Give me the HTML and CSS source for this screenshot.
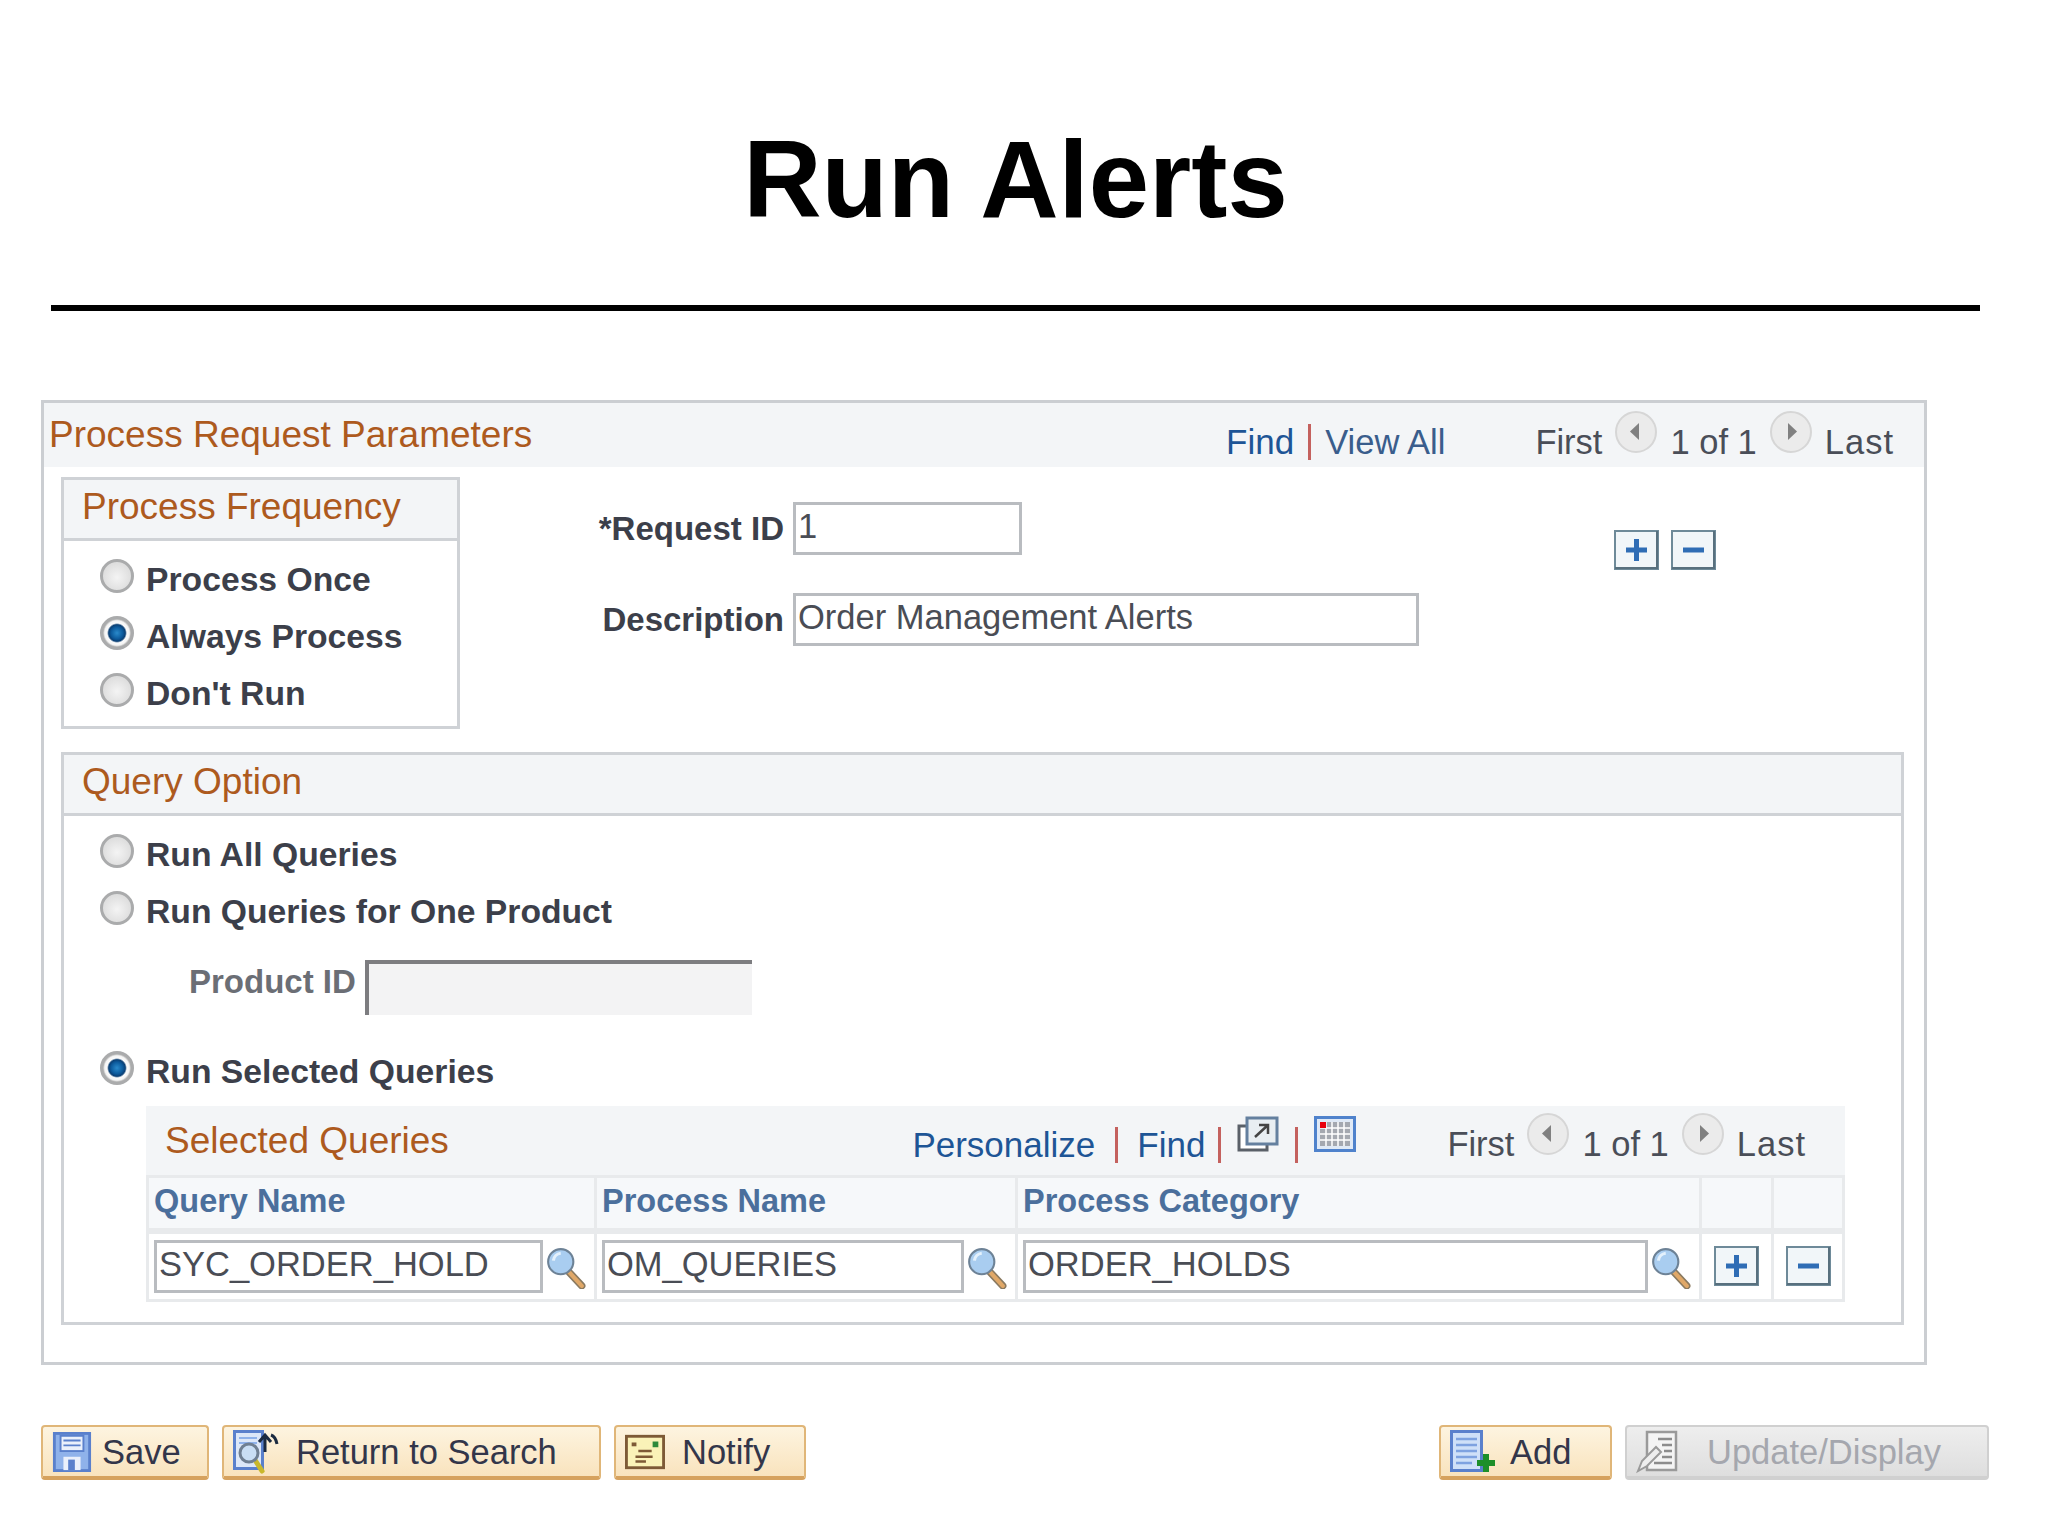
FILE: index.html

```html
<!DOCTYPE html>
<html lang="en">
<head>
    <meta charset="UTF-8">
    <title>Run Alerts</title>
    <link rel="stylesheet" href="styles.css">
</head>
<body>

<svg class="defs" width="0" height="0">
    <symbol id="arrow-prev" viewBox="0 0 42 42">
        <circle cx="21" cy="21" r="20" fill="#ebebeb" stroke="#d6d6d6" stroke-width="2"/>
        <path d="M24 12v17l-9-8.500z" fill="#808080"/>
    </symbol>
    <symbol id="arrow-next" viewBox="0 0 42 42">
        <circle cx="21" cy="21" r="20" fill="#ebebeb" stroke="#d6d6d6" stroke-width="2"/>
        <path d="M18 12v17l9-8.500z" fill="#808080"/>
    </symbol>
    <symbol id="lookup" viewBox="0 0 40 40">
        <path d="M23 24l12 13" stroke="#8a7a60" stroke-width="7" stroke-linecap="round"/>
        <path d="M23 24l12 13" stroke="#e0a868" stroke-width="4" stroke-linecap="round"/>
        <circle cx="15" cy="14" r="12" fill="#a9cdf0" stroke="#6d8296" stroke-width="2"/>
        <path d="M8 13a8 8 0 0 1 7-7" fill="none" stroke="#e4f1fc" stroke-width="3"/>
    </symbol>
    <symbol id="plus" viewBox="0 0 45 40">
        <rect x="1" y="1" width="43" height="38" fill="#f1f6f9" stroke="#6e8a99" stroke-width="2"/>
        <path d="M1 38h43M43 1v38" stroke="#58707e" stroke-width="2"/>
        <path d="M22.500 9v22M12 20h21" stroke="#2f6db5" stroke-width="5"/>
    </symbol>
    <symbol id="minus" viewBox="0 0 45 40">
        <rect x="1" y="1" width="43" height="38" fill="#f1f6f9" stroke="#6e8a99" stroke-width="2"/>
        <path d="M1 38h43M43 1v38" stroke="#58707e" stroke-width="2"/>
        <path d="M12 20h21" stroke="#2f6db5" stroke-width="5"/>
    </symbol>
</svg>

<header class="title">
    <h1>Run Alerts</h1>
</header>

<div class="panel">
    <div class="panel-head">
        <span class="section-title">Process Request Parameters</span>
        <div class="nav">
            <a class="link">Find</a>
            <span class="bar"></span>
            <a class="link muted">View All</a>
            <div class="pager">
                <span>First</span>
                <svg class="arrow"><use href="#arrow-prev"/></svg>
                <span>1 of 1</span>
                <svg class="arrow"><use href="#arrow-next"/></svg>
                <span class="last">Last</span>
            </div>
        </div>
    </div>

    <div class="top-row">
        <div class="box freq-box">
            <div class="box-head">Process Frequency</div>
            <div class="radio-list">
                <label class="option"><span class="radio"></span>Process Once</label>
                <label class="option"><span class="radio checked"></span>Always Process</label>
                <label class="option"><span class="radio"></span>Don't Run</label>
            </div>
        </div>

        <div class="request-form">
            <label class="field-label">*Request ID</label>
            <div class="input request-id">1</div>
            <label class="field-label">Description</label>
            <div class="input description">Order Management Alerts</div>
        </div>

        <div class="row-buttons">
            <svg class="row-btn"><use href="#plus"/></svg>
            <svg class="row-btn"><use href="#minus"/></svg>
        </div>
    </div>

    <div class="box query-box">
        <div class="box-head">Query Option</div>
        <div class="radio-list">
            <label class="option"><span class="radio"></span>Run All Queries</label>
            <label class="option"><span class="radio"></span>Run Queries for One Product</label>
            <div class="product-row">
                <label class="field-label disabled">Product ID</label>
                <div class="input product-id"></div>
            </div>
            <label class="option selected-option"><span class="radio checked"></span>Run Selected Queries</label>
        </div>

        <div class="grid-wrap">
            <div class="grid-head">
                <span class="section-title">Selected Queries</span>
                <div class="nav">
                    <a class="link personalize">Personalize</a>
                    <span class="bar"></span>
                    <a class="link grid-find">Find</a>
                    <span class="bar"></span>
                    <svg class="grid-icon" viewBox="0 0 42 36">
                        <rect x="2" y="10" width="28" height="24" fill="#fff" stroke="#5a6068" stroke-width="3"/>
                        <rect x="10" y="2" width="30" height="26" fill="#e8eef2" stroke="#64809f" stroke-width="3"/>
                        <path d="M18 21l13-12M22 9h9v9" fill="none" stroke="#444" stroke-width="2.500"/>
                    </svg>
                    <span class="bar"></span>
                    <svg class="grid-icon" viewBox="0 0 42 36">
                        <rect x="1.500" y="1.500" width="39" height="33" fill="#dfe9f6" stroke="#4f82cc" stroke-width="3"/>
                        <rect x="6" y="6" width="30" height="24" fill="#a4a8b0"/>
                        <path d="M6 12h30M6 18h30M6 24h30M12 6v24M18 6v24M24 6v24M30 6v24" stroke="#fff" stroke-width="1.500"/>
                        <rect x="6" y="6" width="6" height="6" fill="#e8000c"/>
                    </svg>
                    <div class="pager">
                        <span>First</span>
                        <svg class="arrow"><use href="#arrow-prev"/></svg>
                        <span>1 of 1</span>
                        <svg class="arrow"><use href="#arrow-next"/></svg>
                        <span class="last">Last</span>
                    </div>
                </div>
            </div>
            <table class="grid">
                <colgroup>
                    <col class="col-query">
                    <col class="col-process">
                    <col class="col-category">
                    <col class="col-plus">
                    <col class="col-minus">
                </colgroup>
                <thead>
                    <tr>
                        <th>Query Name</th>
                        <th>Process Name</th>
                        <th>Process Category</th>
                        <th></th>
                        <th></th>
                    </tr>
                </thead>
                <tbody>
                    <tr>
                        <td><div class="cell"><div class="input">SYC_ORDER_HOLD</div><svg class="lookup"><use href="#lookup"/></svg></div></td>
                        <td><div class="cell"><div class="input">OM_QUERIES</div><svg class="lookup"><use href="#lookup"/></svg></div></td>
                        <td><div class="cell"><div class="input">ORDER_HOLDS</div><svg class="lookup"><use href="#lookup"/></svg></div></td>
                        <td class="btn-cell"><svg class="row-btn"><use href="#plus"/></svg></td>
                        <td class="btn-cell"><svg class="row-btn"><use href="#minus"/></svg></td>
                    </tr>
                </tbody>
            </table>
        </div>
    </div>
</div>

<div class="toolbar">
    <div class="button-group">
        <button class="btn save-btn">
            <svg class="btn-icon" viewBox="0 0 40 42">
                <rect x="1.500" y="1.500" width="37" height="39" fill="#8fb2ea" stroke="#5a80cc" stroke-width="3"/>
                <rect x="8" y="4" width="24" height="16" fill="#eaf0fb" stroke="#5a80cc" stroke-width="2"/>
                <path d="M11 9h18M11 14h18" stroke="#5a80cc" stroke-width="2"/>
                <rect x="11" y="26" width="18" height="14" fill="#eaf0fb"/>
                <rect x="16" y="29" width="7" height="11" fill="#5a80cc"/>
            </svg>
            Save
        </button>
        <button class="btn return-btn">
            <svg class="btn-icon wide" viewBox="0 0 46 44">
                <rect x="1.500" y="1.500" width="28" height="37" fill="#dce7f8" stroke="#5a80cc" stroke-width="3"/>
                <path d="M6 8h18M6 13h18" stroke="#8fb2ea" stroke-width="2"/>
                <path d="M22 30l7 11" stroke="#c9b82c" stroke-width="5" stroke-linecap="round"/>
                <circle cx="16" cy="23" r="9" fill="#c9def4" stroke="#6f7f92" stroke-width="3"/>
                <path d="M32 22V6M26 12l6-7 6 7M38 5c3 1 5 4 6 9" fill="none" stroke="#1b2a40" stroke-width="3"/>
            </svg>
            <span>Return to Search</span>
        </button>
        <button class="btn notify-btn">
            <svg class="btn-icon" viewBox="0 0 42 36">
                <rect x="1.500" y="1.500" width="39" height="33" fill="#faf2b8" stroke="#7d5a36" stroke-width="3"/>
                <path d="M7 8h5v4H7z" fill="#7d5a36"/>
                <path d="M29 7h6v6h-6z" fill="#2f8a3a"/>
                <path d="M14 17h14M11 23h18M11 28h11" stroke="#7d5a36" stroke-width="2.500"/>
            </svg>
            Notify
        </button>
    </div>
    <div class="button-group">
        <button class="btn add-btn">
            <svg class="btn-icon wide" viewBox="0 0 46 44">
                <rect x="1.500" y="1.500" width="30" height="39" fill="#cfe0f8" stroke="#5a80cc" stroke-width="3"/>
                <path d="M6 9h21M6 15h21M6 21h21M6 27h21M6 33h16" stroke="#7ea2e0" stroke-width="2.500"/>
                <path d="M36 24v18M27 33h18" stroke="#1d8f2a" stroke-width="6"/>
            </svg>
            <span>Add</span>
        </button>
        <button class="btn disabled-btn">
            <svg class="btn-icon wide" viewBox="0 0 46 44">
                <rect x="11" y="2" width="29" height="38" fill="#f4f4f4" stroke="#9a9a9a" stroke-width="2.500"/>
                <path d="M22 9h14M26 15h10M28 21h8M26 27h10M18 33h18" stroke="#8c8c8c" stroke-width="2.500"/>
                <path d="M2 41l4-10 14-14 5 5-14 14z" fill="#eee" stroke="#9a9a9a" stroke-width="2"/>
            </svg>
            <span>Update/Display</span>
        </button>
    </div>
</div>

</body>
</html>
```

FILE: styles.css

```css
* {
    box-sizing: border-box;
}

body {
    margin: 0;
    padding: 0 59px 46px 41px;
    background-color: #fff;
    font-family: "Liberation Sans", Arial, sans-serif;
    font-size: 33.700px;
    color: #3c3f4a;
}

.defs {
    position: absolute;
}

.title {
    margin: 0 9px 0 10px;
    height: 311px;
    padding-top: 118px;
    border-bottom: 6px solid #000;
    text-align: center;
}

.title h1 {
    margin: 0;
    font-size: 108.500px;
    line-height: 124px;
    font-weight: bold;
    color: #000;
}

.panel {
    margin-top: 89px;
    width: 1886px;
    height: 965px;
    border: 3px solid #cbced2;
}

.panel-head {
    height: 64px;
    padding: 0 30px 0 5px;
    display: flex;
    align-items: center;
    justify-content: space-between;
    background-color: #f3f5f7;
}

.section-title {
    font-size: 37px;
    color: #ad5a1e;
    white-space: nowrap;
}

.nav {
    display: flex;
    align-items: center;
    gap: 14px;
    font-size: 34.500px;
    padding-top: 14px;
}

.link {
    color: #1e5596;
    font-size: 35px;
}

.link.muted {
    color: #3a5d8c;
    font-size: 34.500px;
}

.bar {
    width: 3px;
    height: 36px;
    background-color: #c4615e;
}

.pager {
    display: flex;
    align-items: center;
    gap: 13px;
    margin-left: 76px;
    color: #4a4e58;
}

.last {
    letter-spacing: 1px;
}

.arrow {
    width: 42px;
    height: 42px;
    margin-bottom: 21px;
}

.top-row {
    display: flex;
    align-items: flex-start;
    padding: 10px 0 0 17px;
}

.box {
    border: 3px solid #cfd2d6;
}

.freq-box {
    width: 399px;
    height: 252px;
}

.box-head {
    height: 61px;
    padding: 0 0 4px 18px;
    display: flex;
    align-items: center;
    font-size: 37px;
    color: #ad5a1e;
    background-color: #f3f5f7;
    border-bottom: 3px solid #cfd2d6;
}

.radio-list {
    padding: 9px 0 0 36px;
}

.option {
    height: 57px;
    padding-top: 2px;
    display: flex;
    align-items: center;
    gap: 12px;
    font-weight: bold;
}

.radio {
    width: 34px;
    height: 34px;
    margin-top: -8px;
    border-radius: 50%;
    border: 3px solid #aaabac;
    background: radial-gradient(circle at 50% 55%, #f4f4f4, #d4d4d4);
    flex-shrink: 0;
}

.radio.checked {
    background: radial-gradient(circle, #2a8acb 0, #0c5a9c 30%, #0a3f74 42%, #fbfbfb 50%, #f4f4f4 62%, #b4b4b4 70%, #dcdcdc 100%);
}

.request-form {
    display: grid;
    grid-template-columns: 324px auto;
    column-gap: 9px;
    row-gap: 38px;
    align-items: center;
    padding-top: 25px;
}

.field-label {
    font-size: 33px;
    font-weight: bold;
    text-align: right;
    white-space: nowrap;
}

.field-label.disabled {
    color: #6b6e75;
}

.input {
    height: 53px;
    padding: 0 2px;
    border: 3px solid #b9bcc0;
    background-color: #fff;
    font-size: 34.500px;
    line-height: 43px;
    color: #4a4d55;
    white-space: nowrap;
    overflow: hidden;
}

.request-id {
    width: 229px;
}

.description {
    width: 626px;
}

.row-buttons {
    display: flex;
    gap: 12px;
    margin: 53px 0 0 195px;
}

.row-btn {
    width: 45px;
    height: 40px;
    display: block;
}

.query-box {
    margin: 23px 0 0 17px;
    width: 1843px;
    height: 573px;
}

.product-row {
    display: flex;
    align-items: flex-start;
    gap: 9px;
    margin: 21px 0 0 89px;
}

.product-row .field-label {
    line-height: 44px;
}

.product-id {
    width: 387px;
    height: 55px;
    border: none;
    border-top: 4px solid #7d7d80;
    border-left: 4px solid #7d7d80;
    background-color: #f3f3f4;
}

.selected-option {
    margin-top: 27px;
}

.grid-wrap {
    margin: 7px 0 0 82px;
    width: 1699px;
}

.grid-head {
    height: 69px;
    padding: 1px 39px 0 19px;
    display: flex;
    align-items: center;
    justify-content: space-between;
    background-color: #f3f5f7;
}

.grid-head .nav {
    gap: 16px;
    padding-top: 7px;
}

.grid-head .pager {
    margin-left: 75px;
}

.personalize {
    margin-right: 4px;
}

.grid-find {
    margin: 0 -3px 0 3px;
}

.grid-icon {
    width: 42px;
    height: 36px;
    margin-bottom: 22px;
}

.grid {
    width: 100%;
    table-layout: fixed;
    border-collapse: collapse;
}

.col-query {
    width: 448px;
}

.col-process {
    width: 421px;
}

.col-plus {
    width: 72px;
}

.col-minus {
    width: 71px;
}

th {
    height: 54px;
    padding: 0 5px 2px 5px;
    text-align: left;
    font-size: 32.500px;
    color: #4b6f9c;
    background-color: #f6f8fa;
    border: 3px solid #e8eaec;
}

td {
    height: 70px;
    padding: 0 7px 0 5px;
    border: 3px solid #e8eaec;
    border-top-width: 6px;
}

.cell {
    display: flex;
    align-items: center;
    gap: 2px;
}

.cell .input {
    flex: 1;
}

.lookup {
    width: 42px;
    height: 42px;
    flex-shrink: 0;
    margin-top: 4px;
}

.btn-cell {
    padding: 0 12px;
}

.toolbar {
    display: flex;
    justify-content: space-between;
    margin-top: 60px;
}

.button-group {
    display: flex;
    gap: 13px;
}

.btn {
    height: 55px;
    padding: 1px 0 0 9px;
    display: flex;
    align-items: center;
    gap: 10px;
    font-family: inherit;
    font-size: 34.500px;
    color: #33364a;
    background: linear-gradient(#fdf4e0, #f9e3bd);
    border: 2px solid #e0b678;
    border-bottom: 4px solid #d6a25e;
    border-radius: 4px;
}

.btn-icon {
    width: 40px;
    height: 40px;
}

.btn-icon.wide {
    width: 46px;
    height: 44px;
}

.save-btn {
    width: 168px;
}

.return-btn {
    width: 379px;
    gap: 17px;
}

.notify-btn {
    width: 192px;
    gap: 17px;
}

.add-btn {
    width: 173px;
    gap: 14px;
}

.disabled-btn {
    width: 364px;
    gap: 25px;
    color: #a5a7ae;
    background: linear-gradient(#eeeeee, #dedede);
    border-color: #d0d0d0;
}
```
